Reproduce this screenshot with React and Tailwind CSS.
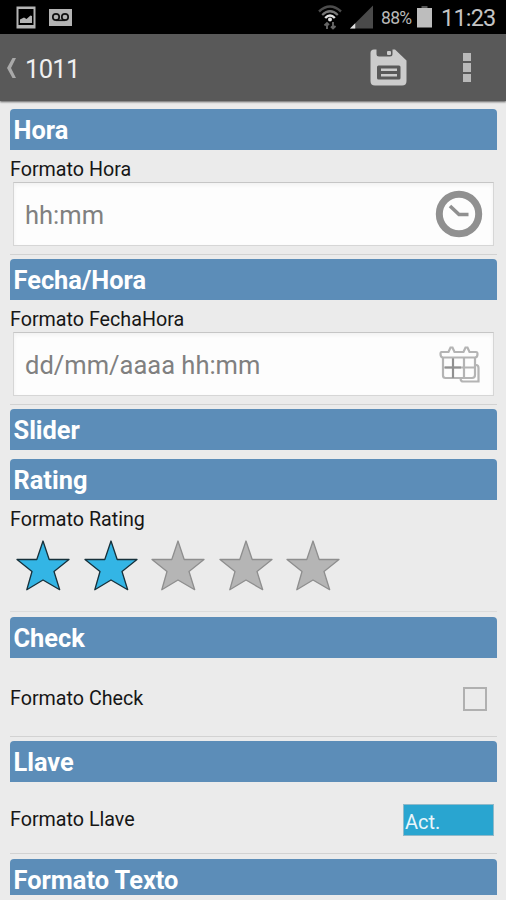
import { useState } from 'react';

const STAR_PATH = 'M27 2 L33.2 20.5 L53 20.5 L38 32.5 L43.7 50.7 L27 41 L10.8 50.7 L16 32.5 L1 20.5 L20.8 20.5 Z';

function StatusBar() {
  return (
    <div className="h-[34px] shrink-0 bg-black flex items-center justify-between pl-4 pr-[12px] text-[#b8b8b8]">
      <div className="flex items-center gap-[13px]">
        <svg width="20" height="23" viewBox="0 0 20 23">
          <rect x="0.5" y="0.5" width="19" height="22" fill="#b4b4b4" />
          <rect x="2.5" y="3" width="15" height="16" fill="#000" />
          <path d="M4 17 V13.5 L8 11.5 L10.5 13 L14.5 9.5 L16 10 V17 Z" fill="#b4b4b4" />
        </svg>
        <svg width="23" height="17" viewBox="0 0 23 17">
          <rect width="23" height="17" fill="#b4b4b4" />
          <circle cx="7" cy="8" r="3.2" fill="none" stroke="#111" strokeWidth="1.7" />
          <circle cx="16" cy="8" r="3.2" fill="none" stroke="#111" strokeWidth="1.7" />
          <path d="M7 11.3 H16" stroke="#111" strokeWidth="1.6" />
        </svg>
      </div>
      <div className="flex items-center">
        <svg className="mr-[8px]" width="24" height="25" viewBox="0 0 24 25" fill="none">
          <path d="M1 6.5 Q12 -3.5 23 6.5" stroke="#4c4c4c" strokeWidth="2.4" />
          <path d="M4.2 10 Q12 2.5 19.8 10" stroke="#777" strokeWidth="2.2" />
          <path d="M7.2 13 Q12 8 16.8 13" stroke="#e0e0e0" strokeWidth="2.4" />
          <circle cx="12" cy="14.5" r="2" fill="#e0e0e0" />
          <path d="M9 24 V18 M6.5 20.5 L9 18 L11 20 M15 17 V23.5 M17.5 21 L15 23.5 L13 21.5" stroke="#666" strokeWidth="1.9" />
        </svg>
        <svg className="mr-2" width="23" height="24" viewBox="0 0 24 24">
          <path d="M24 0 V24 H0 Z" fill="#4a4a4a" />
          <path d="M5.5 18.5 V24 H0 Z" fill="#e0e0e0" />
        </svg>
        <span className="w-[36px] text-[17.5px] tracking-[-0.7px] whitespace-nowrap mt-[3px]">88%</span>
        <svg className="mr-[9px]" width="15" height="22" viewBox="0 0 15 22">
          <rect x="4.5" y="0" width="6" height="2" fill="#555" />
          <rect x="0" y="2" width="15" height="19.5" fill="#bdbdbd" />
        </svg>
        <span className="text-[23.5px] leading-none mt-[4px] w-[53px] whitespace-nowrap tracking-[-0.8px] text-[#c4c4c4]">11:23</span>
      </div>
    </div>
  );
}

function ActionBar({ title }) {
  return (
    <div className="h-[67px] shrink-0 bg-[#595959] flex items-center pl-[6px] pr-[35px] shadow-[0_1px_2px_rgba(0,0,0,0.6)]">
      <svg width="11" height="22" viewBox="0 0 11 22">
        <path d="M6.5 1 H10 L5 11 L10 21 H6.5 L1 11 Z" fill="#a9a9a9" />
      </svg>
      <h1 className="ml-[8px] flex-1 text-[25.5px] leading-none text-[#f0f0f0] tracking-[-0.7px] mt-[5px]">{title}</h1>
      <svg className="mr-[56px]" width="37" height="37" viewBox="0 0 37 37">
        <path
          d="M4 0.5 H6.5 V5 Q6.5 7.5 9 7.5 H20 Q22.5 7.5 22.5 5 V0.5 H25 L36.5 11.5 V32 Q36.5 36.5 32 36.5 H5 Q0.5 36.5 0.5 32 V4 Q0.5 0.5 4 0.5 Z"
          fill="#cccccc"
        />
        <rect x="17" y="2" width="4" height="4" rx="1" fill="#cccccc" />
        <rect x="7" y="16.5" width="23.5" height="14" rx="1.5" fill="#595959" />
        <path d="M11 20.7 H27 M11 26.3 H27" stroke="#cccccc" strokeWidth="2.6" />
      </svg>
      <div className="flex flex-col gap-[2px]">
        <span className="size-[8.5px] bg-[#b9b9b9]" />
        <span className="size-[8.5px] bg-[#b9b9b9]" />
        <span className="size-[8.5px] bg-[#b9b9b9]" />
      </div>
    </div>
  );
}

function SectionTitle({ children }) {
  return (
    <h2 className="h-[41px] mb-[0.5px] shrink-0 rounded-t-[4px] bg-[#5c8db8] pl-[3.5px] text-[25.4px] leading-[42px] font-bold text-white overflow-hidden">
      {children}
    </h2>
  );
}

function Label({ children }) {
  return <span className="text-[19.7px] leading-[24px] text-[#161616] whitespace-nowrap">{children}</span>;
}

function Field({ placeholder, icon }) {
  return (
    <div className="mx-[3px] h-[64px] bg-[#fdfdfd] border border-[#d6d6d6] border-t-[#c6c6c6] flex items-center justify-between pl-[11px] pr-[10px] shadow-[inset_0_2px_4px_rgba(0,0,0,0.05)]">
      <span className="text-[25.5px] text-[#808080] mt-[2px]">{placeholder}</span>
      {icon}
    </div>
  );
}

function ClockIcon() {
  return (
    <svg width="48" height="48" viewBox="0 0 48 48" fill="none" stroke="#909090">
      <circle cx="24" cy="24" r="19.7" strokeWidth="7" />
      <path d="M15 16 L24 24.5 H33.5" strokeWidth="3.6" />
    </svg>
  );
}

function CalendarIcon() {
  return (
    <svg className="mr-[3px] mt-[2px]" width="41" height="38" viewBox="0 0 41 38" fill="#fdfdfd" stroke="#b4b4b4" strokeWidth="2.2">
      <path d="M36 19 H37 Q39.5 19 39.5 22 V35.5 H24 Q22 35.5 21.5 33" />
      <path d="M4 11.5 V29.5 Q4 32 6.5 32 H33 Q36 32 36 29 V11.5" />
      <path d="M4 21.5 H36 M25 11 V32" />
      <path d="M14 11 V32 M6 21.5 H22" stroke="#909090" />
      <path d="M2.5 6 H9.5 L11.5 1.5 H13.5 L15.5 6 H24.5 L26.5 1.5 H28.5 L30.5 6 H37 Q38.5 6 38.5 8 Q38.5 11.5 36 11.5 H4 Q1.5 11.5 1.5 8 Q1.5 6 2.5 6 Z" />
    </svg>
  );
}

function Rating({ value, onChange }) {
  return (
    <div className="flex gap-[13.5px] pl-[6px] mt-[6.5px]">
      {[1, 2, 3, 4, 5].map((n) => (
        <button key={n} className="block" onClick={() => onChange(n)}>
          <svg width="54" height="54" viewBox="0 0 54 54">
            <path
              d={STAR_PATH}
              fill={n <= value ? '#33b5e5' : '#b5b5b5'}
              stroke={n <= value ? '#17303a' : '#8e8e8e'}
              strokeWidth="1.3"
              strokeLinejoin="round"
            />
          </svg>
        </button>
      ))}
    </div>
  );
}

function App() {
  const [rating, setRating] = useState(2);
  const [checked, setChecked] = useState(false);

  return (
    <div className="h-[900px] w-[506px] overflow-hidden bg-[#ebebeb] flex flex-col font-['Roboto',sans-serif]">
      <StatusBar />
      <ActionBar title="1011" />
      <div className="flex flex-col pt-[8px] pl-[10px] pr-[9px]">
        <section className="h-[146px] flex flex-col border-b border-[#d2d2d2]">
          <SectionTitle>Hora</SectionTitle>
          <div className="h-[31.5px] pt-[7px] flex"><Label>Formato Hora</Label></div>
          <Field placeholder="hh:mm" icon={<ClockIcon />} />
        </section>

        <section className="mt-[4px] h-[146px] flex flex-col border-b border-[#d2d2d2]">
          <SectionTitle>Fecha/Hora</SectionTitle>
          <div className="h-[31.5px] pt-[7px] flex"><Label>Formato FechaHora</Label></div>
          <Field placeholder="dd/mm/aaaa hh:mm" icon={<CalendarIcon />} />
        </section>

        <section className="mt-[4px] h-[49.5px]">
          <SectionTitle>Slider</SectionTitle>
        </section>

        <section className="h-[153.5px] flex flex-col border-b border-[#dcdcdc]">
          <SectionTitle>Rating</SectionTitle>
          <div className="h-[32px] pt-[7.5px] flex"><Label>Formato Rating</Label></div>
          <Rating value={rating} onChange={setRating} />
        </section>

        <section className="mt-[5px] h-[119.5px] flex flex-col border-b border-[#d2d2d2]">
          <SectionTitle>Check</SectionTitle>
          <div className="flex-1 flex items-center justify-between pr-[10px] pt-[4px]">
            <Label>Formato Check</Label>
            <button
              className="size-[24px] border-2 border-[#b0b0b0]"
              onClick={() => setChecked(!checked)}
            >
              {checked && <span className="block size-3 m-auto bg-[#33b5e5]" />}
            </button>
          </div>
        </section>

        <section className="mt-[4.5px] h-[113px] flex flex-col border-b border-[#d2d2d2]">
          <SectionTitle>Llave</SectionTitle>
          <div className="flex-1 flex items-center justify-between pr-[3px] pt-[5px]">
            <Label>Formato Llave</Label>
            <button className="h-[32px] w-[91px] bg-[#29a5d0] border border-[#8fb9c9] pl-[1px] pt-[3px] text-left text-[20px] leading-none text-[#e8f6fb]">
              Act.
            </button>
          </div>
        </section>

        <section className="mt-[4.5px] h-[36.5px] overflow-hidden">
          <SectionTitle>Formato Texto</SectionTitle>
        </section>
      </div>
    </div>
  );
}

export default App;
